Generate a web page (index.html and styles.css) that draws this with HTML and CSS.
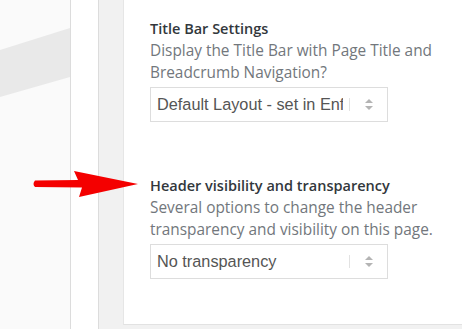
FILE: index.html
```html
<!DOCTYPE html>
<html lang="en">
<head>
    <meta charset="UTF-8">
    <meta name="viewport" content="width=device-width, initial-scale=1.0">
    <title>Page Settings</title>
    <link rel="stylesheet" href="styles.css">
</head>
<body>
    <div class="page">
        <div class="canvas">
            <svg class="stripe" width="70" height="329" viewBox="0 0 70 329">
                <polygon points="0,50 70,28 70,77 0,97" fill="#e9e9e9"/>
            </svg>
        </div>
        <div class="spacer"></div>
        <div class="gutter"></div>
        <div class="panel">
            <div class="field">
                <h3>Title Bar Settings</h3>
                <p>Display the Title Bar with Page Title and Breadcrumb Navigation?</p>
                <div class="select">
                    <span class="value">Default Layout - set in Enfold</span>
                    <span class="arrows">
                        <svg width="8" height="11" viewBox="0 0 8 11"><path d="M4 0L8 4H0Z M4 11L0 7H8Z" fill="#b4b4b4"/></svg>
                    </span>
                </div>
            </div>
            <div class="field">
                <h3>Header visibility and transparency</h3>
                <p>Several options to change the header transparency and visibility on this page.</p>
                <div class="select">
                    <span class="value">No transparency</span>
                    <span class="arrows">
                        <svg width="8" height="11" viewBox="0 0 8 11"><path d="M4 0L8 4H0Z M4 11L0 7H8Z" fill="#b4b4b4"/></svg>
                    </span>
                </div>
            </div>
        </div>
    </div>

    <!-- red pointer drawn over the screenshot -->
    <svg class="pointer" width="110" height="30" viewBox="0 0 110 30">
        <path d="M3 9.5 L46 9 L42 0 L106 13 L47 26 L50 16.5 L3 16 Q0 13 3 9.5Z" fill="#f40000"/>
    </svg>
</body>
</html>
```

FILE: styles.css
```css
body {
    margin: 0;
    padding: 0;
    background-color: #f1f1f1;
    font-family: "Open Sans", sans-serif;
    overflow: hidden;
}
.page {
    display: flex;
    height: 329px;
}
.canvas {
    width: 70px;
    flex-shrink: 0;
    background: #fafafa;
    border-right: 1px solid #dcdcdc;
}
.stripe {
    display: block;
}
.spacer {
    width: 27px;
    flex-shrink: 0;
    background: #fff;
    border-right: 1px solid #dcdcdc;
}
.gutter {
    width: 24px;
    flex-shrink: 0;
    background: #f1f1f1;
}
.panel {
    flex: 1;
    height: 325px;
    background: #fff;
    border-left: 1px solid #e6e6e6;
    border-bottom: 1px solid #e2e2e2;
    padding-left: 26px;
    padding-top: 19px;
    box-sizing: border-box;
}
.field {
    margin-bottom: 54px;
}
.field h3 {
    margin: 0;
    font-size: 14.5px;
    font-weight: 600;
    line-height: 20px;
    color: #32373c;
}
.field p {
    margin: 1px 0 0;
    width: 295px;
    font-size: 15.4px;
    line-height: 22px;
    color: #72777c;
}
.select {
    display: flex;
    align-items: center;
    width: 238px;
    height: 35px;
    margin-top: 3px;
    border: 1px solid #dddddd;
    box-sizing: border-box;
    background: #fff;
}
.select .value {
    flex: 1;
    overflow: hidden;
    white-space: nowrap;
    padding-left: 6px;
    margin-right: 6px;
    font-family: "Liberation Sans", Arial, sans-serif;
    font-size: 16.3px;
    color: #555;
}
.select .arrows {
    display: flex;
    align-items: center;
    justify-content: center;
    width: 37px;
    height: 13px;
    border-left: 1px solid #e2e2e2;
}
.select .arrows svg {
    display: block;
}
.pointer {
    position: absolute;
    left: 32px;
    top: 171px;
}
```
